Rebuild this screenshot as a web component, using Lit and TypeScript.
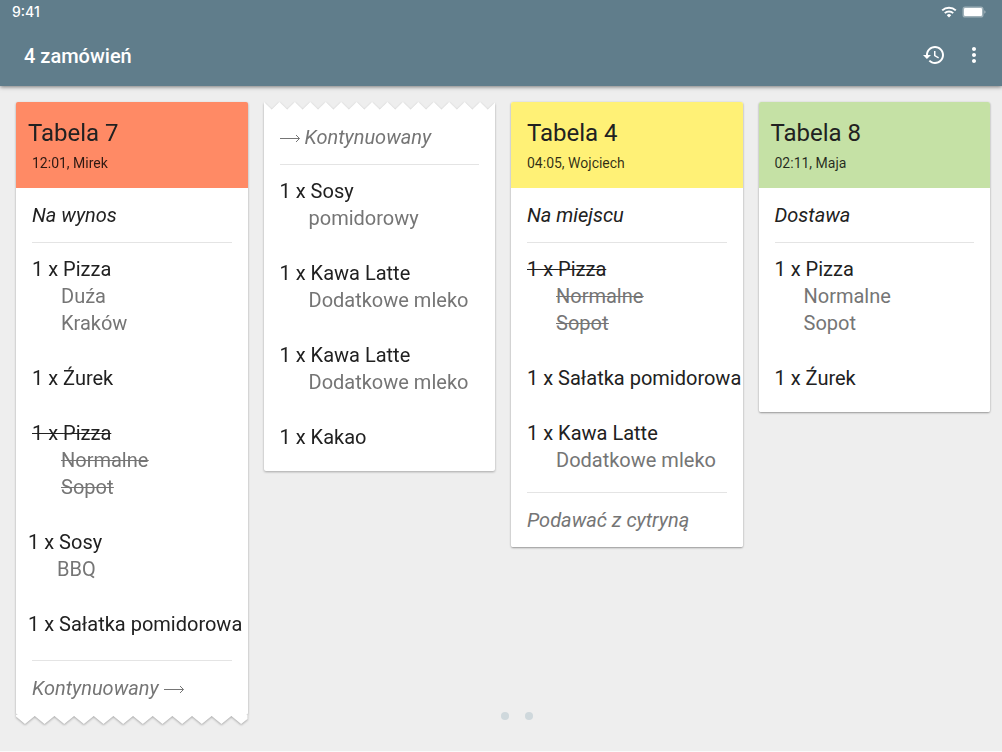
import { LitElement, html, css, nothing } from "lit";
import { customElement, property, state } from "lit/decorators.js";
import { classMap } from "lit/directives/class-map.js";

interface Line {
  name: string;
  options?: string[];
  done?: boolean;
  outdent?: boolean;
}

interface Ticket {
  title?: string;
  outdentTitle?: boolean;
  meta?: string;
  tone?: "orange" | "yellow" | "green";
  kind?: string;
  lines: Line[];
  note?: string;
  continued?: boolean;
  continues?: boolean;
}

const TICKETS: Ticket[] = [
  {
    title: "Tabela 7",
    outdentTitle: true,
    meta: "12:01, Mirek",
    tone: "orange",
    kind: "Na wynos",
    continues: true,
    lines: [
      { name: "Pizza", options: ["Duźa", "Kraków"] },
      { name: "Źurek" },
      { name: "Pizza", options: ["Normalne", "Sopot"], done: true },
      { name: "Sosy", options: ["BBQ"], outdent: true },
      { name: "Sałatka pomidorowa", outdent: true },
    ],
  },
  {
    continued: true,
    lines: [
      { name: "Sosy", options: ["pomidorowy"] },
      { name: "Kawa Latte", options: ["Dodatkowe mleko"] },
      { name: "Kawa Latte", options: ["Dodatkowe mleko"] },
      { name: "Kakao" },
    ],
  },
  {
    title: "Tabela 4",
    meta: "04:05, Wojciech",
    tone: "yellow",
    kind: "Na miejscu",
    note: "Podawać z cytryną",
    lines: [
      { name: "Pizza", options: ["Normalne", "Sopot"], done: true },
      { name: "Sałatka pomidorowa" },
      { name: "Kawa Latte", options: ["Dodatkowe mleko"] },
    ],
  },
  {
    title: "Tabela 8",
    outdentTitle: true,
    meta: "02:11, Maja",
    tone: "green",
    kind: "Dostawa",
    lines: [
      { name: "Pizza", options: ["Normalne", "Sopot"] },
      { name: "Źurek" },
    ],
  },
];

const arrow = html`<svg class="arrow" width="20" height="10" viewBox="0 0 20 10" aria-hidden="true">
  <path d="M0 5.5H19.4M16 2L19.5 5.5L16 9" fill="none" stroke="currentColor" stroke-width="1" />
</svg>`;

// Fifteen teeth across the top edge of a continued receipt.
const topTeeth = () => {
  let d = "M0 8V0";
  for (let i = 0; i < 15; i++) d += `L${i * 2 + 1} 7.5L${i * 2 + 2} 0`;
  return d + "V8Z";
};

// Wider teeth along the bottom edge, cut off part-way at the right side.
const bottomTeeth = () => {
  let d = "M0 0V1.5L9 9";
  for (let i = 0; i < 11; i++) d += `L${18.8 + i * 19.7} 1L${28.6 + i * 19.7} 9`;
  return d + "L232 4V0Z";
};

@customElement("order-ticket")
export class OrderTicket extends LitElement {
  @property({ attribute: false }) ticket!: Ticket;

  static styles = css`
    :host {
      display: block;
      min-width: 0;
      font-size: 20px;
      line-height: 27px;
      color: #212121;
      white-space: nowrap;
    }
    .card {
      border-radius: 2px;
      box-shadow: 0 1px 2px rgba(0, 0, 0, 0.36), 0 0 2px rgba(0, 0, 0, 0.08);
      background: #fff;
    }
    .torn {
      background: none;
      box-shadow: none;
      filter: drop-shadow(0 1px 1px rgba(0, 0, 0, 0.3));
    }
    .head {
      box-sizing: border-box;
      height: 86px;
      padding: 16px 16px 0;
      border-radius: 2px 2px 0 0;
    }
    .orange { background: #ff8a65; }
    .yellow { background: #fff176; }
    .green { background: #c5e1a5; }
    .title {
      margin: 0;
      font-size: 24px;
      line-height: 30px;
      font-weight: 400;
    }
    .meta {
      margin: 6px 0 0;
      font-size: 14px;
      line-height: 19px;
      color: rgba(0, 0, 0, 0.82);
    }
    .body {
      background: #fff;
      padding: 0 16px;
      border-radius: 0 0 2px 2px;
    }
    .outdent { margin-left: -4px; }
    .band {
      display: flex;
      align-items: center;
      gap: 5px;
      margin: 0;
      padding: 14px 0 13px;
      font-style: italic;
    }
    .muted { color: #757575; }
    .lines {
      list-style: none;
      margin: 0;
      padding: 13px 0 20px;
      display: flex;
      flex-direction: column;
      gap: 28px;
    }
    .lines.continues { padding-bottom: 22px; }
    .lines.noted { padding-bottom: 18px; }
    .ruled { border-top: 1px solid #e4e4e4; }
    .done { text-decoration: line-through; text-decoration-thickness: 1px; }
    .options {
      list-style: none;
      margin: 0;
      padding: 0 0 0 29px;
      color: #757575;
    }
    .done .options { text-decoration: line-through; text-decoration-thickness: 1px; }
    .edge { display: block; width: 100%; }
  `;

  render() {
    const t = this.ticket;
    return html`
      <article class=${classMap({ card: true, torn: !!(t.continued || t.continues) })}>
        ${t.continued
          ? html`<svg class="edge" height="8" viewBox="0 0 30 8" preserveAspectRatio="none" aria-hidden="true">
              <path d=${topTeeth()} fill="#fff" />
            </svg>`
          : html`<header class="head ${t.tone}">
              <h2 class=${classMap({ title: true, outdent: !!t.outdentTitle })}>${t.title}</h2>
              <p class="meta">${t.meta}</p>
            </header>`}
        <div class="body">
          ${t.continued
            ? html`<p class="band muted">${arrow}<span>Kontynuowany</span></p>`
            : html`<p class="band">${t.kind}</p>`}
          <ul class=${classMap({ lines: true, ruled: true, continues: !!t.continues, noted: !!t.note })}>
            ${t.lines.map(
              (l) => html`<li class=${classMap({ done: !!l.done, outdent: !!l.outdent })}>
                1 x ${l.name}
                ${l.options
                  ? html`<ul class="options">${l.options.map((o) => html`<li>${o}</li>`)}</ul>`
                  : nothing}
              </li>`
            )}
          </ul>
          ${t.note ? html`<p class="band muted ruled">${t.note}</p>` : nothing}
          ${t.continues
            ? html`<p class="band muted ruled"><span>Kontynuowany</span>${arrow}</p>`
            : nothing}
        </div>
        ${t.continues
          ? html`<svg class="edge" height="10" viewBox="0 0 232 10" preserveAspectRatio="none" aria-hidden="true">
              <path d=${bottomTeeth()} fill="#fff" />
            </svg>`
          : nothing}
      </article>
    `;
  }
}

@customElement("app-root")
export class AppRoot extends LitElement {
  @state() private tickets = TICKETS;

  static styles = css`
    :host {
      display: flex;
      flex-direction: column;
      box-sizing: border-box;
      position: relative;
      min-height: 100vh;
      background: #eee;
      border-bottom: 1px solid #fafafa;
      font-family: Roboto, "Liberation Sans", sans-serif;
    }
    .top {
      background: #607d8b;
      color: #fff;
      box-shadow: 0 1px 4px rgba(0, 0, 0, 0.5);
    }
    .status {
      display: flex;
      align-items: center;
      justify-content: space-between;
      height: 24px;
      padding: 0 16px 0 12px;
      font: 500 14px/24px Inter, Roboto, sans-serif;
    }
    .signals {
      display: flex;
      align-items: center;
      gap: 5px;
    }
    .bar {
      display: flex;
      align-items: center;
      justify-content: space-between;
      height: 62px;
      padding: 0 16px 0 24px;
    }
    .heading {
      margin: 0;
      padding-top: 2px;
      font-size: 20px;
      line-height: 28px;
      font-weight: 500;
    }
    .actions {
      display: flex;
      gap: 16px;
    }
    .action {
      display: block;
      width: 24px;
      height: 24px;
      padding: 0;
      border: 0;
      background: none;
      color: inherit;
      cursor: pointer;
    }
    .icon { display: block; fill: currentColor; }
    .board {
      display: grid;
      grid-template-columns: repeat(4, minmax(0, 1fr));
      align-items: start;
      gap: 16px;
      padding: 16px 12px 24px 16px;
    }
    .pager {
      position: absolute;
      left: 0;
      right: 0;
      bottom: 31px;
      display: flex;
      justify-content: center;
      gap: 16px;
      padding-left: 32px;
    }
    .dot {
      width: 8px;
      height: 8px;
      padding: 0;
      border: 0;
      border-radius: 50%;
      background: #cfd8dc;
    }
  `;

  render() {
    return html`
      <div class="top">
        <div class="status">
          <span>9:41</span>
          <span class="signals">
            <svg width="16" height="12" viewBox="0 0 16 12" fill="none" stroke="#fff" stroke-width="2" aria-hidden="true">
              <path d="M1.2 4.4a9.8 9.8 0 0 1 13.6 0" />
              <path d="M3.8 7.1a6 6 0 0 1 8.4 0" />
              <path d="M8 11.4L5.8 9.2a3.1 3.1 0 0 1 4.4 0Z" fill="#fff" stroke="none" />
            </svg>
            <svg width="24" height="12" viewBox="0 0 24 12" aria-hidden="true">
              <rect x="0.5" y="0.5" width="21" height="11" rx="2.6" fill="#fff" fill-opacity="0.4" />
              <rect x="2" y="2" width="18" height="8" rx="1.2" fill="#fff" />
              <path d="M22.4 4.2a2 2 0 0 1 0 3.6Z" fill="#fff" fill-opacity="0.5" />
            </svg>
          </span>
        </div>
        <div class="bar">
          <h1 class="heading">4 zamówień</h1>
          <div class="actions">
            <button class="action" aria-label="Historia">
              <svg class="icon" width="24" height="24" viewBox="0 0 24 24">
                <path d="M13 3c-4.97 0-9 4.03-9 9H1l3.89 3.89.07.14L9 12H6c0-3.87 3.13-7 7-7s7 3.13 7 7-3.13 7-7 7c-1.93 0-3.68-.79-4.94-2.06l-1.42 1.42C8.27 19.99 10.51 21 13 21c4.97 0 9-4.03 9-9s-4.03-9-9-9zm-1 5v5l4.28 2.54.72-1.21-3.5-2.08V8H12z" />
              </svg>
            </button>
            <button class="action" aria-label="Więcej">
              <svg class="icon" width="24" height="24" viewBox="0 0 24 24">
                <path d="M12 8c1.1 0 2-.9 2-2s-.9-2-2-2-2 .9-2 2 .9 2 2 2zm0 2c-1.1 0-2 .9-2 2s.9 2 2 2 2-.9 2-2-.9-2-2-2zm0 6c-1.1 0-2 .9-2 2s.9 2 2 2 2-.9 2-2-.9-2-2-2z" />
              </svg>
            </button>
          </div>
        </div>
      </div>
      <main class="board">
        ${this.tickets.map((t) => html`<order-ticket .ticket=${t}></order-ticket>`)}
      </main>
      <nav class="pager" aria-label="Strony">
        <button class="dot" aria-label="Strona 1"></button>
        <button class="dot" aria-label="Strona 2"></button>
      </nav>
    `;
  }
}
